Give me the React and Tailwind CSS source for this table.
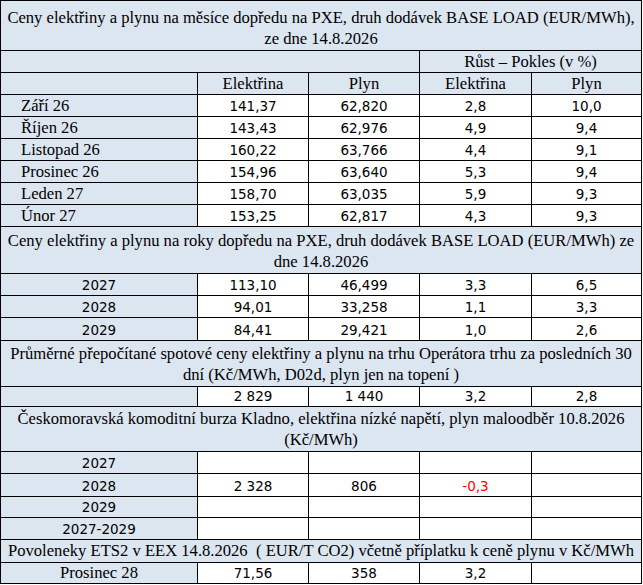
const months = [
  ['Září 26', '141,37', '62,820', '2,8', '10,0'],
  ['Říjen 26', '143,43', '62,976', '4,9', '9,4'],
  ['Listopad 26', '160,22', '63,766', '4,4', '9,1'],
  ['Prosinec 26', '154,96', '63,640', '5,3', '9,4'],
  ['Leden 27', '158,70', '63,035', '5,9', '9,3'],
  ['Únor 27', '153,25', '62,817', '4,3', '9,3'],
]

const years = [
  ['2027', '113,10', '46,499', '3,3', '6,5', 'h-[22px]'],
  ['2028', '94,01', '33,258', '1,1', '3,3', 'h-[22px]'],
  ['2029', '84,41', '29,421', '1,0', '2,6', 'h-[23px]'],
]

const kladno = [
  ['2027', '', '', '', '', 'h-[22px]'],
  ['2028', '2 328', '806', '-0,3', '', 'h-[23px]'],
  ['2029', '', '', '', '', 'h-[21px]'],
  ['2027-2029', '', '', '', '', 'h-[22px]'],
]

const serif = "font-['Liberation_Serif','Times_New_Roman',serif] text-[16.6px]"
const sans = "font-['DejaVu_Sans',Verdana,sans-serif] text-[13.5px]"
const cell = 'border border-black p-0 align-bottom leading-[18px] pb-[1px]'
const blue = 'bg-[#dce6f1]'

function Title({ children, h }) {
  return (
    <tr className={h}>
      <td colSpan={5} className={`${cell} ${blue} ${serif} text-center !leading-[21px]`}>
        {children}
      </td>
    </tr>
  )
}

function Num({ v, red }) {
  return (
    <td className={`${cell} bg-white ${sans} text-center ${red ? 'text-[#ff0000]' : ''}`}>{v}</td>
  )
}

export default function App() {
  return (
    <div className="w-[643px] h-[585px] bg-white text-black">
      <table className="table-fixed border-collapse w-[641px]">
        <colgroup>
          <col className="w-[197px]" />
          <col className="w-[111px]" />
          <col className="w-[111px]" />
          <col className="w-[112px]" />
          <col className="w-[110px]" />
        </colgroup>
        <tbody>
          <Title h="h-[50px]">
            Ceny elektřiny a plynu na měsíce dopředu na PXE, druh dodávek BASE LOAD (EUR/MWh),
            <br />
            ze dne 14.8.2026
          </Title>
          <tr className="h-[22px]">
            <td colSpan={3} className={`${cell} ${blue}`}></td>
            <td colSpan={2} className={`${cell} ${blue} ${serif} text-center`}>Růst – Pokles (v %)</td>
          </tr>
          <tr className="h-[22px]">
            <td className={`${cell} ${blue}`}></td>
            <td className={`${cell} ${blue} ${serif} text-center`}>Elektřina</td>
            <td className={`${cell} ${blue} ${serif} text-center`}>Plyn</td>
            <td className={`${cell} ${blue} ${serif} text-center`}>Elektřina</td>
            <td className={`${cell} ${blue} ${serif} text-center`}>Plyn</td>
          </tr>
          {months.map(m => (
            <tr key={m[0]} className="h-[22px]">
              <td className={`${cell} ${blue} ${serif} pl-5`}>{m[0]}</td>
              <Num v={m[1]} />
              <Num v={m[2]} />
              <Num v={m[3]} />
              <Num v={m[4]} />
            </tr>
          ))}

          <Title h="h-[47px]">
            Ceny elektřiny a plynu na roky dopředu na PXE, druh dodávek BASE LOAD (EUR/MWh) ze
            <br />
            dne 14.8.2026
          </Title>
          {years.map(y => (
            <tr key={y[0]} className={y[5]}>
              <td className={`${cell} ${blue} ${sans} text-center`}>{y[0]}</td>
              <Num v={y[1]} />
              <Num v={y[2]} />
              <Num v={y[3]} />
              <Num v={y[4]} />
            </tr>
          ))}

          <Title h="h-[46px]">
            Průměrné přepočítané spotové ceny elektřiny a plynu na trhu Operátora trhu za posledních 30
            <br />
            dní (Kč/MWh, D02d, plyn jen na topení )
          </Title>
          <tr className="h-[20px]">
            <td className={`${cell} ${blue}`}></td>
            <Num v="2 829" />
            <Num v="1 440" />
            <Num v="3,2" />
            <Num v="2,8" />
          </tr>

          <Title h="h-[45px]">
            Českomoravská komoditní burza Kladno, elektřina nízké napětí, plyn maloodběr 10.8.2026
            <br />
            (Kč/MWh)
          </Title>
          {kladno.map(k => (
            <tr key={k[0]} className={k[5]}>
              <td className={`${cell} ${blue} ${sans} text-center`}>{k[0]}</td>
              <Num v={k[1]} />
              <Num v={k[2]} />
              <Num v={k[3]} red={k[3].startsWith('-')} />
              <Num v={k[4]} />
            </tr>
          ))}

          <Title h="h-[23px]">
            Povoleneky ETS2 v EEX 14.8.2026&nbsp; ( EUR/T CO2) včetně příplatku k ceně plynu v Kč/MWh
          </Title>
          <tr className="h-[21px]">
            <td className={`${cell} ${blue} ${serif} text-center`}>Prosinec 28</td>
            <Num v="71,56" />
            <Num v="358" />
            <Num v="3,2" />
            <Num v="" />
          </tr>
        </tbody>
      </table>
    </div>
  )
}
